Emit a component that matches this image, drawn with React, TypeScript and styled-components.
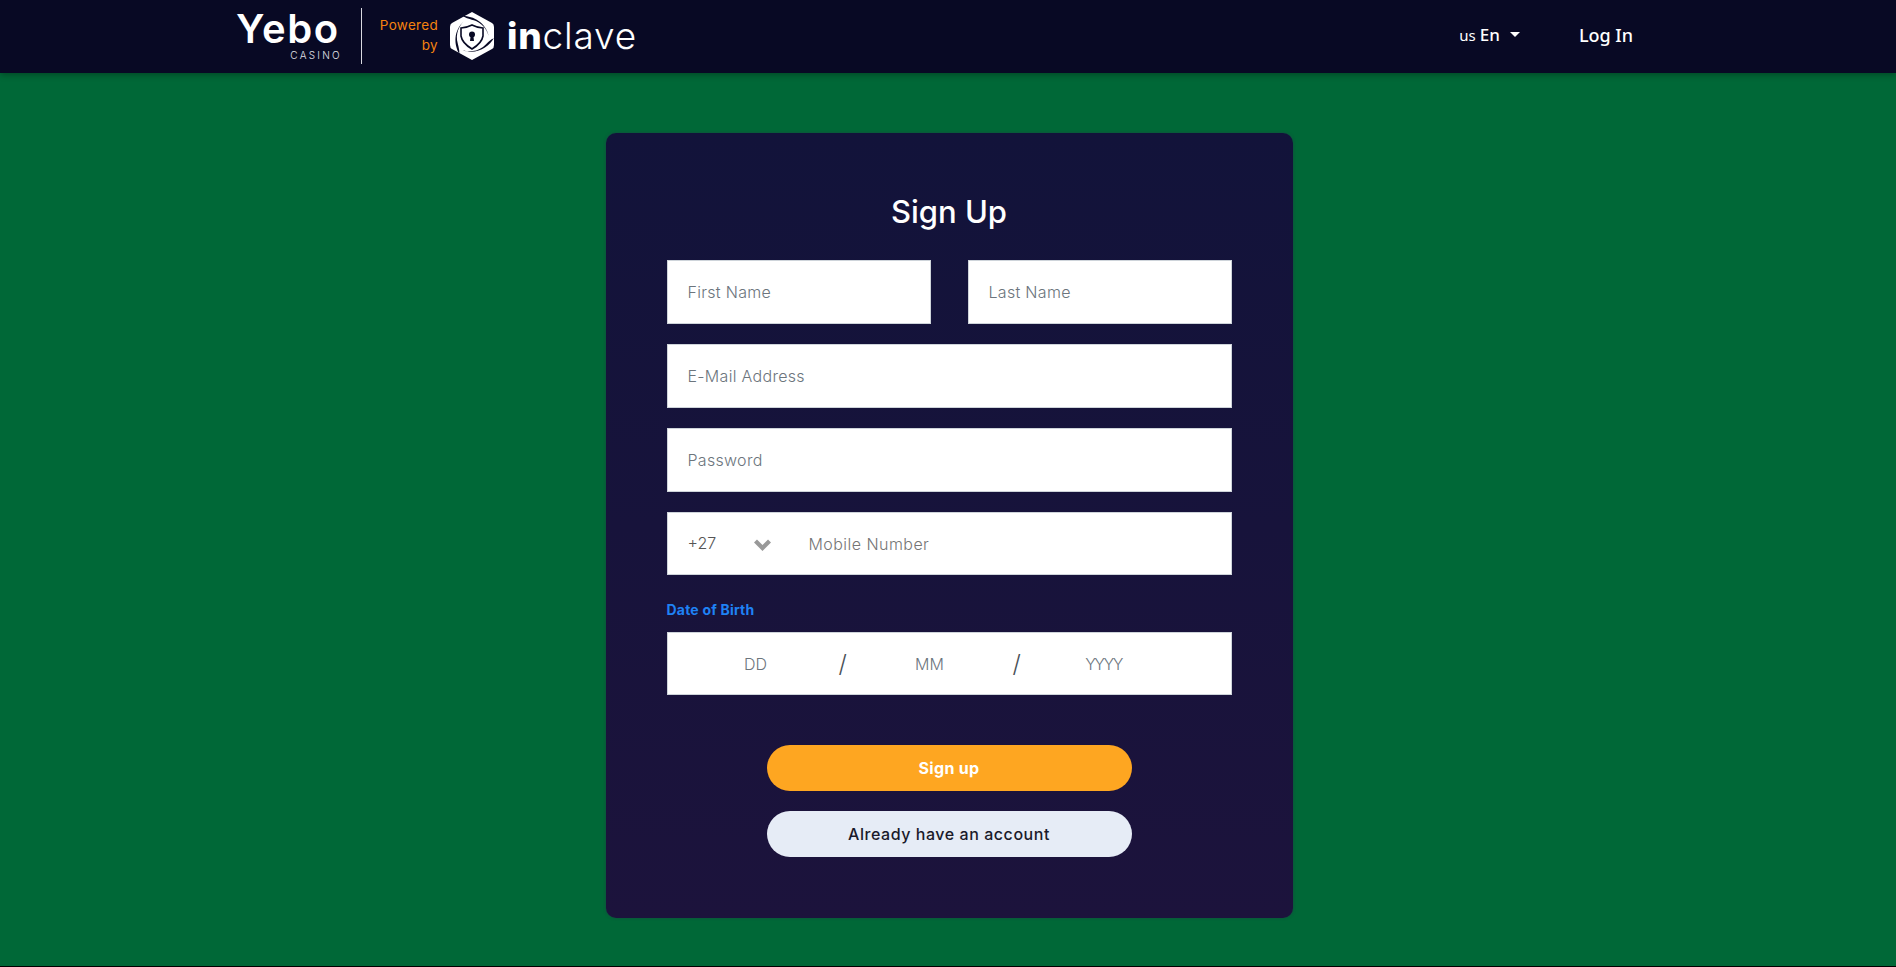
import React from "react";
import styled, { createGlobalStyle } from "styled-components";

const GlobalStyle = createGlobalStyle`
    html, body {
        margin: 0;
        padding: 0;
        background: #000;
    }
    * {
        box-sizing: border-box;
    }
`;

const font = `Inter, "Noto Sans", sans-serif`;

const ShieldLogo = () => (
    <svg width="46" height="50" viewBox="0 0 46 50" aria-hidden="true">
        <path d="M23 1 L43 12 Q45 13 45 16 L45 34 Q45 37 43 38 L23 49 L3 38 Q1 37 1 34 L1 16 Q1 13 3 12 Z" fill="#fff" />
        {[0, 120, 240].map((angle) => (
            <path
                key={angle}
                d="M14 5 C24 5 37 11 40 26 C39 22 36 14 27 10 C21 8 16 7 14 5 Z"
                fill="#080924"
                transform={`rotate(${angle} 23 25)`}
            />
        ))}
        <path d="M23 14 C27 16 31 17 34 17 L34 25 C33 31 28 35 23 38 C18 35 13 31 12 25 L12 17 C15 17 19 16 23 14 Z" fill="#fff" stroke="#080924" strokeWidth="1.6" />
        <circle cx="23" cy="23.500" r="3" fill="#080924" />
        <path d="M21.800 24 L24.200 24 L25 30 L21 30 Z" fill="#080924" />
    </svg>
);

const SignUpForm = () => (
    <Card>
        <Title>Sign Up</Title>
        <NameRow>
            <Field placeholder="First Name" />
            <Field placeholder="Last Name" />
        </NameRow>
        <Field placeholder="E-Mail Address" />
        <Field placeholder="Password" />
        <PhoneBox>
            <Dial>+27</Dial>
            <DialArrow>
                <svg width="19" height="14" viewBox="0 0 19 14" aria-hidden="true">
                    <path d="M2.500 3 L9.500 10 L16.500 3" fill="none" stroke="#999" strokeWidth="4.200" />
                </svg>
            </DialArrow>
            <PhoneInput placeholder="Mobile Number" />
        </PhoneBox>
        <DobLabel>Date of Birth</DobLabel>
        <DobBox>
            <DobPart>DD</DobPart>
            <Slash>/</Slash>
            <DobPart>MM</DobPart>
            <Slash>/</Slash>
            <DobPart $tight>YYYY</DobPart>
        </DobBox>
        <Actions>
            <PillButton $primary>Sign up</PillButton>
            <PillButton>Already have an account</PillButton>
        </Actions>
    </Card>
);

const App = () => (
    <>
        <GlobalStyle />
        <Page>
            <Header>
                <Brand>
                    <YeboLogo>
                        <YeboWord>Yebo</YeboWord>
                        <CasinoWord>CASINO</CasinoWord>
                    </YeboLogo>
                    <Divider />
                    <Powered>
                        <span>Powered</span>
                        <span>by</span>
                    </Powered>
                    <ShieldLogo />
                    <InclaveWord>
                        <b>in</b>clave
                    </InclaveWord>
                </Brand>
                <Nav>
                    <Lang>
                        <small>us</small> En
                        <Caret />
                    </Lang>
                    <LogIn>Log In</LogIn>
                </Nav>
            </Header>
            <Main>
                <SignUpForm />
            </Main>
        </Page>
    </>
);

export default App;

const Page = styled.div`
    height: 967px;
    display: flex;
    flex-direction: column;
    background: #006837;
    border-bottom: 1px solid #000;
    overflow: hidden;
    font-family: ${font};
`;

const Header = styled.header`
    height: 73px;
    flex: none;
    display: flex;
    align-items: center;
    justify-content: space-between;
    padding: 0 263px 2px 236px;
    background: #080924;
    box-shadow: 0 2px 6px rgba(0, 0, 0, 0.3);
`;

const Brand = styled.div`
    display: flex;
    align-items: center;
`;

const YeboLogo = styled.div`
    width: 106px;
    display: flex;
    flex-direction: column;
    align-items: flex-end;
    color: #fff;
`;

const YeboWord = styled.div`
    height: 36px;
    font-size: 40px;
    line-height: 36px;
    font-weight: 600;
    letter-spacing: 1.5px;
    align-self: flex-start;
`;

const CasinoWord = styled.div`
    margin-top: 2px;
    font-size: 10px;
    line-height: 12px;
    font-weight: 300;
    letter-spacing: 2.3px;
    color: #e4e4ea;
`;

const Divider = styled.div`
    width: 1px;
    height: 56px;
    margin-left: 19px;
    background: #d9d9e0;
`;

const Powered = styled.div`
    margin-left: 19px;
    margin-right: 11px;
    width: 57px;
    display: flex;
    flex-direction: column;
    align-items: flex-end;
    gap: 3px;
    color: #f5820f;
    font-size: 13.5px;
    line-height: 17px;
    letter-spacing: 0.3px;
    white-space: nowrap;
`;

const InclaveWord = styled.div`
    margin-left: 12px;
    color: #fff;
    font-size: 37px;
    line-height: 44px;
    font-weight: 300;
    letter-spacing: 0.8px;
    b {
        font-weight: 800;
    }
`;

const Nav = styled.nav`
    display: flex;
    align-items: center;
    gap: 59px;
    margin-bottom: 2px;
    color: #fff;
    font-family: "Noto Sans", sans-serif;
`;

const Lang = styled.div`
    display: flex;
    align-items: center;
    gap: 4px;
    font-size: 17px;
    font-weight: 500;
    small {
        font-size: 15px;
        font-weight: 400;
    }
`;

const Caret = styled.span`
    width: 0;
    height: 0;
    margin-left: 6px;
    border-left: 5px solid transparent;
    border-right: 5px solid transparent;
    border-top: 5px solid #fff;
`;

const LogIn = styled.div`
    font-size: 18px;
    font-weight: 500;
`;

const Main = styled.main`
    flex: 1;
    display: flex;
    justify-content: center;
    align-items: flex-start;
    padding: 60px 0 0 2px;
`;

const Card = styled.div`
    width: 687px;
    height: 785px;
    display: flex;
    flex-direction: column;
    padding: 60px 61px 0;
    background: linear-gradient(180deg, #12133a 0%, #1c133c 100%);
    border-radius: 10px;
    box-shadow: 0 0 3px rgba(30, 60, 70, 0.8);
`;

const Title = styled.h1`
    margin: 0 0 30px;
    color: #fff;
    font-size: 31px;
    line-height: 37px;
    font-weight: 500;
    text-align: center;
`;

const NameRow = styled.div`
    display: grid;
    grid-template-columns: 264px 264px;
    justify-content: space-between;
    margin-bottom: 20px;
    input {
        margin-bottom: 0;
    }
`;

const Field = styled.input`
    display: block;
    width: 100%;
    height: 64px;
    margin-bottom: 20px;
    padding: 0 20px;
    background: #fff;
    border: 1px solid #ced4da;
    border-radius: 0;
    outline: none;
    font-family: ${font};
    font-size: 16px;
    font-weight: 300;
    letter-spacing: 0.3px;
    &::placeholder {
        color: #6c757d;
        opacity: 1;
    }
`;

const PhoneBox = styled.div`
    height: 63px;
    display: flex;
    align-items: center;
    padding-left: 20px;
    background: #fff;
    border: 1px solid #ced4da;
`;

const Dial = styled.span`
    width: 65px;
    margin-top: -2px;
    color: #555;
    font-size: 16px;
    font-weight: 300;
`;

const DialArrow = styled.span`
    width: 56px;
    display: flex;
    padding-top: 3px;
`;

const PhoneInput = styled.input`
    flex: 1;
    min-width: 0;
    height: 100%;
    padding: 0;
    border: 0;
    outline: none;
    background: transparent;
    font-family: ${font};
    font-size: 16px;
    font-weight: 300;
    letter-spacing: 0.45px;
    &::placeholder {
        color: #757575;
        opacity: 1;
    }
`;

const DobLabel = styled.div`
    margin: 25px 0 13px;
    color: #1f82f5;
    font-size: 14px;
    line-height: 19px;
    font-weight: 700;
    letter-spacing: 0.2px;
`;

const DobBox = styled.div`
    height: 63px;
    display: flex;
    align-items: center;
    padding-left: 58px;
    background: #fff;
    border: 1px solid #ced4da;
    color: #6c757d;
    font-size: 16px;
    font-weight: 300;
`;

const DobPart = styled.span<{ $tight?: boolean }>`
    width: 60px;
    text-align: center;
    letter-spacing: ${(p) => (p.$tight ? "-1.5px" : "0")};
`;

const Slash = styled.span`
    width: 8px;
    margin: 0 53px;
    color: #495057;
    font-size: 24px;
    font-weight: 300;
    text-align: center;
`;

const Actions = styled.div`
    display: flex;
    flex-direction: column;
    align-items: center;
    gap: 20px;
    margin-top: 50px;
`;

const PillButton = styled.button<{ $primary?: boolean }>`
    width: 365px;
    height: 46px;
    border: 0;
    border-radius: 23px;
    background: ${(p) => (p.$primary ? "#fea621" : "#e6ecf6")};
    color: ${(p) => (p.$primary ? "#fff" : "#1a1a2a")};
    font-family: ${font};
    font-size: 16px;
    font-weight: ${(p) => (p.$primary ? 700 : 500)};
    letter-spacing: ${(p) => (p.$primary ? "0.3px" : "0.55px")};
`;
